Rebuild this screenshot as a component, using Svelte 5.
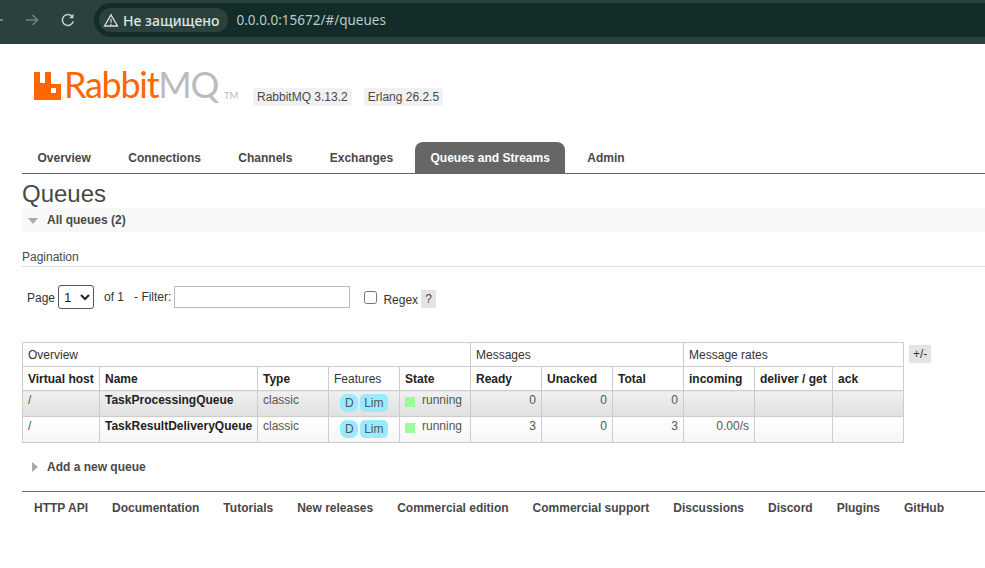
<script>
  const tabs = ['Overview', 'Connections', 'Channels', 'Exchanges', 'Queues and Streams', 'Admin'];
  const links = ['HTTP API', 'Documentation', 'Tutorials', 'New releases', 'Commercial edition', 'Commercial support', 'Discussions', 'Discord', 'Plugins', 'GitHub'];
  const queues = [
    { name: 'TaskProcessingQueue', ready: 0, unacked: 0, total: 0, incoming: '' },
    { name: 'TaskResultDeliveryQueue', ready: 3, unacked: 0, total: 3, incoming: '0.00/s' }
  ];
</script>

<div class="browser">
  <div class="nav-icons">
    <span class="back"></span>
    <svg class="fwd" width="16" height="16" viewBox="0 0 16 16"><path d="M2 8h11M8.500 3l5 5-5 5" fill="none" stroke="#6f8480" stroke-width="1.500"/></svg>
    <svg class="reload" width="16" height="16" viewBox="0 0 16 16"><path d="M13.200 9.500A5.500 5.500 0 1 1 12 4.300" fill="none" stroke="#c4d0cd" stroke-width="1.500"/><path d="M13.500 1.800v4.400H9.100z" fill="#c4d0cd"/></svg>
  </div>
  <div class="omnibox">
    <div class="chip">
      <svg width="16" height="15" viewBox="0 0 16 15"><path d="M8 1.800 14.500 13h-13z" fill="none" stroke="#d5dfdc" stroke-width="1.300"/><path d="M8 5.800v4M8 10.800v1.200" stroke="#d5dfdc" stroke-width="1.200"/></svg>
      <span>Не защищено</span>
    </div>
    <span class="url">0.0.0.0:15672/#/queues</span>
  </div>
</div>

<div class="page">
  <header class="logo-row">
    <div class="logo">
      <svg class="mark" width="27" height="28" viewBox="0 0 27 28"><path fill-rule="evenodd" d="M0 0h6v11h5V0h6v12h10v16H0zM17 16v5h5v-5z" fill="#ff6600"/></svg>
      <span class="rabbit">Rabbit</span><span class="mq">MQ</span><span class="tm">TM</span>
    </div>
    <div class="versions">
      <span>RabbitMQ 3.13.2</span>
      <span>Erlang 26.2.5</span>
    </div>
  </header>

  <nav class="tabs">
    {#each tabs as tab}
      <a href="#/" class:active={tab === 'Queues and Streams'}>{tab}</a>
    {/each}
  </nav>

  <h1>Queues</h1>
  <h2 class="section"><span class="arrow-down"></span>All queues (2)</h2>

  <h3>Pagination</h3>
  <div class="filter">
    <span class="page-label">Page</span>
    <select><option>1</option></select>
    <span class="of">of 1</span>
    <span class="flt">- Filter:</span>
    <input type="text" />
    <input type="checkbox" />
    <span class="regex">Regex</span>
    <span class="help">?</span>
  </div>

  <div class="table-row">
    <table>
      <colgroup>
        <col style="width:77px" /><col style="width:158px" /><col style="width:71px" /><col style="width:71px" />
        <col style="width:71px" /><col style="width:71px" /><col style="width:71px" /><col style="width:71px" />
        <col style="width:71px" /><col style="width:78px" /><col style="width:71px" />
      </colgroup>
      <thead>
        <tr class="group">
          <th colspan="5">Overview</th>
          <th colspan="3">Messages</th>
          <th colspan="3">Message rates</th>
        </tr>
        <tr class="cols">
          <th>Virtual host</th><th>Name</th><th>Type</th><th class="plain">Features</th><th>State</th>
          <th>Ready</th><th>Unacked</th><th>Total</th>
          <th>incoming</th><th>deliver / get</th><th>ack</th>
        </tr>
      </thead>
      <tbody>
        {#each queues as q, i}
          <tr class={i % 2 ? 'even' : 'odd'}>
            <td>/</td>
            <td class="qname">{q.name}</td>
            <td>classic</td>
            <td class="features"><span class="tag">D</span><span class="tag">Lim</span></td>
            <td><span class="state"><span class="dot"></span>running</span></td>
            <td class="num">{q.ready}</td>
            <td class="num">{q.unacked}</td>
            <td class="num">{q.total}</td>
            <td class="num">{q.incoming}</td>
            <td></td>
            <td></td>
          </tr>
        {/each}
      </tbody>
    </table>
    <span class="plus-minus">+/-</span>
  </div>

  <h2 class="add"><span class="arrow-right"></span>Add a new queue</h2>

  <footer>
    {#each links as link}
      <a href="#/">{link}</a>
    {/each}
  </footer>
</div>

<style>
  :global(body) {
    background: #fff;
    font-family: "Liberation Sans", Arial, sans-serif;
    font-size: 12px;
    color: #484848;
    overflow: hidden;
  }

  .browser {
    height: 44px;
    background: #2b413e;
    display: flex;
    align-items: center;
    box-sizing: border-box;
    padding-bottom: 4px;
  }
  .nav-icons {
    display: flex;
    align-items: center;
    width: 94px;
    flex: none;
  }
  .back {
    width: 3px;
    height: 1.500px;
    background: #6f8480;
  }
  .fwd { margin-left: 21px; }
  .reload { margin-left: 20px; }
  .omnibox {
    flex: 1;
    height: 34px;
    background: #132c2a;
    border-radius: 17px 0 0 17px;
    display: flex;
    align-items: center;
    padding-left: 5px;
    gap: 8px;
    font-family: "Noto Sans", sans-serif;
  }
  .chip {
    height: 24px;
    background: #2b413e;
    border-radius: 12px;
    display: flex;
    align-items: center;
    gap: 4px;
    padding: 0 9px 0 4px;
    color: #dde6e3;
    font-weight: 500;
    font-size: 14px;
  }
  .url {
    color: #b9cac6;
    font-size: 13.500px;
  }

  .page {
    padding: 0 0 0 22px;
  }

  .logo-row {
    display: flex;
    align-items: flex-end;
    height: 62px;
  }
  .logo {
    width: 231px;
    display: flex;
    align-items: flex-end;
    padding-left: 12px;
    box-sizing: border-box;
    height: 57px;
    line-height: 35px;
    font-family: Lato, sans-serif;
  }
  .mark {
    flex: none;
    margin-bottom: 6px;
    margin-right: 3px;
  }
  .rabbit, .mq {
    font-size: 36px;
    letter-spacing: -1.300px;
    color: #f60;
    margin-bottom: 4px;
  }
  .mq { color: #bbb; }
  .tm {
    font-size: 9.500px;
    color: #bbb;
    line-height: 18px;
    margin: 0 0 1px 6px;
  }
  .versions {
    display: flex;
    gap: 12px;
    margin-bottom: 0;
  }
  .versions span {
    background: #f1f1f1;
    border-radius: 4px;
    padding: 1px 4px;
    line-height: 16px;
  }

  .tabs {
    display: flex;
    margin-top: 36px;
    border-bottom: 1px solid #666;
    height: 31px;
  }
  .tabs a {
    padding: 9px 15.500px 0;
    margin-right: 6.400px;
    font-weight: bold;
    color: #484848;
    text-decoration: none;
    border-radius: 8px 8px 0 0;
    line-height: 14px;
  }
  .tabs a.active {
    background: #666;
    color: #fff;
  }

  h1 {
    font-size: 24px;
    font-weight: normal;
    margin: 6px 0 0;
    line-height: 28px;
  }
  .section {
    margin: 0;
    height: 24px;
    background: #f8f8f8;
    font-size: 12px;
    line-height: 23px;
    display: flex;
    align-items: center;
    font-weight: bold;
  }
  .arrow-down {
    width: 0;
    height: 0;
    border-left: 5.500px solid transparent;
    border-right: 5.500px solid transparent;
    border-top: 6px solid #aaa;
    margin: 2px 9px 0 6px;
  }
  h3 {
    font-size: 12px;
    font-weight: normal;
    margin: 18px 0 0;
    line-height: 15px;
    height: 15px;
    padding-bottom: 1px;
    border-bottom: 1px solid #ddd;
  }

  .filter {
    display: flex;
    align-items: center;
    height: 24px;
    margin-top: 18px;
    padding-left: 5px;
    color: #333;
  }
  .page-label { margin-top: 2px; }
  select {
    width: 36px;
    height: 24px;
    margin: 0 0 0 3px;
    font-family: "Liberation Sans", sans-serif;
    font-size: 13.300px;
    background: #fff;
    border: 1px solid #555;
    border-radius: 3px;
    color: #222;
    padding: 0 0 0 1px;
  }
  .of { margin-left: 10px; margin-top: -1px; }
  .flt { margin-left: 10px; margin-top: -1px; }
  input[type="text"] {
    width: 176px;
    height: 22px;
    box-sizing: border-box;
    border: 1px solid #bbb;
    margin: 0 0 0 3px;
    padding: 0;
    background: #fff;
  }
  input[type="checkbox"] {
    width: 13px;
    height: 13px;
    margin: 0 0 0 14px;
  }
  .regex { margin-left: 6px; margin-top: 5px; }
  .help {
    width: 15px;
    height: 18px;
    background: #e4e4e4;
    text-align: center;
    line-height: 18px;
    margin-left: 3px;
    margin-top: 4px;
    color: #484848;
  }

  .table-row {
    display: flex;
    align-items: flex-start;
    margin-top: 33px;
  }
  table {
    border-collapse: collapse;
    table-layout: fixed;
    width: 882px;
    flex: none;
    color: #484848;
  }
  th, td {
    border: 1px solid #ccc;
    padding: 0 5px;
    text-align: left;
    white-space: nowrap;
    overflow: visible;
  }
  .group th {
    font-weight: normal;
    height: 23px;
    color: #333;
  }
  .cols th {
    height: 22px;
    padding-top: 1px;
    color: #222;
    font-weight: bold;
  }
  .cols th.plain {
    font-weight: normal;
    color: #333;
  }
  tbody td {
    height: 26px;
    vertical-align: top;
    padding-top: 2px;
    padding-bottom: 0;
    box-sizing: border-box;
    line-height: 14px;
    color: #555;
  }
  tr.odd td { background: linear-gradient(#f0f0f0, #e0e0e0); }
  tr.even td { background: linear-gradient(#fff, #f6f6f6); }
  td.num { text-align: right; }
  td.qname {
    font-weight: bold;
    color: #222;
  }
  td.features {
    text-align: center;
    padding: 3px 0 0;
  }
  .tag {
    display: inline-block;
    background: #99ebff;
    border-radius: 5px;
    padding: 0 4px;
    line-height: 18px;
    margin: 0 1px;
    color: #555;
  }
  .tag:first-child { padding: 0 4.500px; border-radius: 7px; }
  .state {
    display: flex;
    align-items: flex-start;
  }
  .dot {
    width: 10px;
    height: 10px;
    background: #99ff99;
    margin: 4px 7px 0 0;
    flex: none;
  }
  .plus-minus {
    margin: 3px 0 0 5px;
    background: #e4e4e4;
    width: 22px;
    height: 18px;
    line-height: 18px;
    text-align: center;
    color: #333;
  }

  .add {
    margin: 16px 0 0;
    font-size: 12px;
    font-weight: bold;
    line-height: 16px;
    display: flex;
    align-items: center;
  }
  .arrow-right {
    width: 0;
    height: 0;
    border-top: 5.500px solid transparent;
    border-bottom: 5.500px solid transparent;
    border-left: 6px solid #aaa;
    margin: 0 9px 0 10px;
  }

  footer {
    margin-top: 16px;
    border-top: 1px solid #666;
    display: flex;
    padding: 9px 0 0 12px;
    gap: 24px;
  }
  footer a {
    font-weight: bold;
    color: #484848;
    text-decoration: none;
    line-height: 14px;
  }
</style>
